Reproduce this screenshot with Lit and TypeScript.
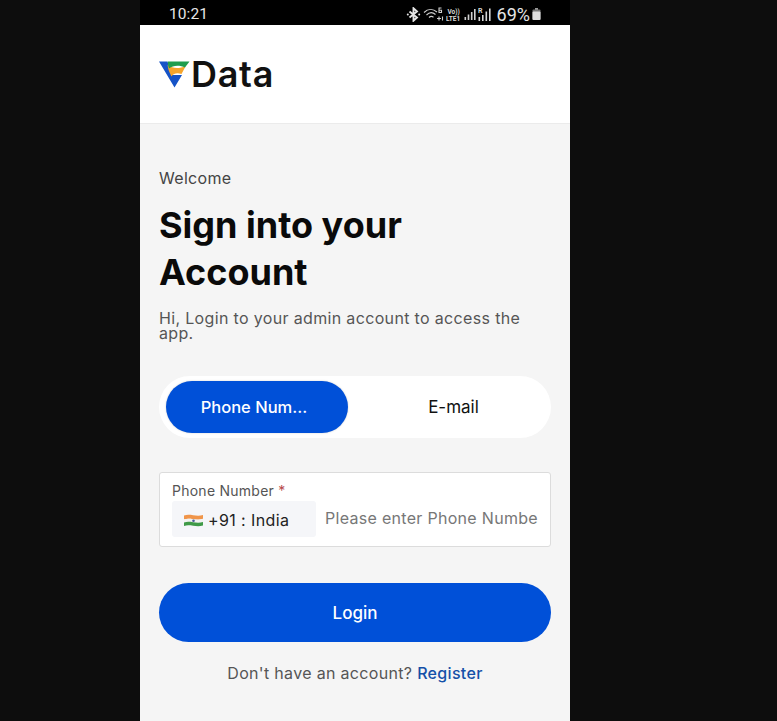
import { LitElement, html, css } from "lit";
import { customElement } from "lit/decorators.js";

@customElement("app-root")
export class AppRoot extends LitElement {
  static styles = css`
    :host {
      display: block;
      height: 721px;
      overflow: hidden;
      background: #0d0d0d;
      font-family: Inter, "Liberation Sans", sans-serif;
    }
    .phone {
      width: 430px;
      height: 721px;
      margin-left: 140px;
      background: #f5f5f5;
      display: flex;
      flex-direction: column;
    }

    /* status bar */
    .status {
      height: 25px;
      flex: none;
      background: #000;
      color: #e6e6e6;
      display: flex;
      align-items: center;
      padding: 3px 29px 0 29px;
      box-sizing: border-box;
    }
    .time {
      font-family: Roboto, sans-serif;
      font-size: 15.5px;
      letter-spacing: 0.1px;
    }
    .status-icons {
      margin-left: auto;
      display: flex;
      align-items: center;
      gap: 2px;
    }
    .pct {
      font-family: Roboto, sans-serif;
      font-size: 18px;
      margin-left: 4px;
    }
    .status-icons svg {
      display: block;
    }

    /* header */
    .header {
      height: 99px;
      flex: none;
      box-sizing: border-box;
      background: #fff;
      border-bottom: 1px solid #ebebeb;
      display: flex;
      align-items: center;
      padding: 0 0 0 19px;
      gap: 1px;
    }
    .brand {
      font-size: 36px;
      font-weight: 600;
      color: #111;
      line-height: 1;
      letter-spacing: 0.7px;
    }

    /* body */
    .content {
      padding: 44px 19px 0 19px;
      display: flex;
      flex-direction: column;
    }
    .welcome {
      font-size: 16px;
      line-height: 20px;
      color: #444;
      letter-spacing: 0.3px;
    }
    h1 {
      margin: 14px 0 0 0;
      font-size: 36px;
      line-height: 47px;
      font-weight: 700;
      color: #0a0a0a;
    }
    .sub {
      margin: 15px 0 0 0;
      font-size: 16px;
      line-height: 15px;
      color: #555;
      letter-spacing: 0.34px;
    }

    /* tabs */
    .tabs {
      margin-top: 35px;
      height: 62px;
      border-radius: 31px;
      background: #fff;
      display: flex;
      align-items: center;
      padding: 0 7px;
      box-sizing: border-box;
    }
    .tab {
      width: 182px;
      height: 52px;
      border-radius: 26px;
      display: flex;
      align-items: center;
      justify-content: center;
      font-size: 17px;
      font-weight: 500;
      color: #111;
    }
    .tab.active {
      box-sizing: border-box;
      padding-right: 6px;
      font-size: 16.5px;
      background: #0050d8;
      color: #fff;
      box-shadow: 0 0 2px rgba(0, 0, 0, 0.2);
    }
    .tab.other {
      flex: 1;
      font-weight: 400;
      padding-left: 15px;
    }

    /* field */
    .field {
      margin-top: 34px;
      height: 75px;
      box-sizing: border-box;
      background: #fff;
      border: 1px solid #dcdcdc;
      border-radius: 3px;
      padding: 9px 12px 0 12px;
    }
    .label {
      font-size: 14px;
      line-height: 18px;
      color: #555;
      letter-spacing: 0.25px;
    }
    .req {
      color: #b84a4a;
    }
    .row {
      display: flex;
      align-items: center;
      margin-top: 1px;
    }
    .code {
      width: 144px;
      height: 36px;
      flex: none;
      box-sizing: border-box;
      background: #f5f6f9;
      border-radius: 3px;
      display: flex;
      align-items: center;
      padding: 2px 0 0 12px;
      gap: 5px;
      font-size: 16px;
      color: #222;
      letter-spacing: 0.4px;
    }
    .placeholder {
      margin: 0 0 2px 9px;
      width: 213px;
      overflow: hidden;
      white-space: nowrap;
      font-size: 16px;
      color: #777;
      letter-spacing: 0.3px;
    }

    /* footer */
    .login {
      margin-top: 36px;
      height: 59px;
      border-radius: 30px;
      background: #0050d8;
      color: #fff;
      display: flex;
      align-items: center;
      justify-content: center;
      font-size: 17px;
      font-weight: 500;
    }
    .register {
      margin-top: 21px;
      text-align: center;
      font-size: 16px;
      line-height: 20px;
      color: #555;
      letter-spacing: 0.32px;
    }
    .register a {
      color: #1450a8;
      font-weight: 500;
      text-decoration: none;
    }
  `;

  render() {
    return html`
      <div class="phone">
        <div class="status">
          <span class="time">10:21</span>
          <div class="status-icons">
            <svg width="15" height="15" viewBox="0 0 15 15" fill="none" stroke="#e6e6e6" stroke-width="1.9">
              <path d="M3.5 4.5l7.5 6-3.5 3.2V1.3L11 4.5l-7.5 6" />
              <circle cx="1.8" cy="7.5" r="1" fill="#e6e6e6" stroke="none" />
              <circle cx="13.2" cy="7.5" r="1" fill="#e6e6e6" stroke="none" />
            </svg>
            <svg width="21" height="15" viewBox="0 0 21 15" fill="none" stroke="#cfcfcf" stroke-width="1.1">
              <path d="M1 5.5C5 1.5 10 1.5 14 5" />
              <path d="M3.5 8C6.5 5 9.5 5 12.5 7.5" />
              <path d="M6 10.5C7.5 9 9 9 10.5 10.2" />
              <path d="M14 11.5h4M16 9.5v4M19.5 13.5V9.5" />
              <path d="M18.5 1H16v4.5h2.5V3.3H16" />
            </svg>
            <svg width="16" height="15" viewBox="0 0 16 15" fill="#d8d8d8">
              <text x="1.5" y="6.5" font-size="6.5" font-family="Roboto, sans-serif" font-weight="700">Vo))</text>
              <text x="0" y="13.5" font-size="6.5" font-family="Roboto, sans-serif" font-weight="700">LTE1</text>
            </svg>
            <svg width="12" height="13" viewBox="0 0 12 13" fill="#cfcfcf">
              <rect x="0.5" y="9" width="1.6" height="3" />
              <rect x="3.7" y="6.5" width="1.6" height="5.5" />
              <rect x="6.9" y="4" width="1.6" height="8" />
              <rect x="10" y="1" width="1.6" height="11" />
            </svg>
            <svg width="13" height="15" viewBox="0 0 13 15" fill="#d8d8d8">
              <text x="0" y="6" font-size="7" font-family="Roboto, sans-serif" font-weight="700">R</text>
              <rect x="0.5" y="10" width="1.6" height="4" />
              <rect x="4" y="8" width="1.6" height="6" />
              <rect x="7.5" y="4.5" width="1.6" height="9.5" />
              <rect x="11" y="1.5" width="1.6" height="12.5" />
            </svg>
            <span class="pct">69%</span>
            <svg width="9" height="12" viewBox="0 0 9 12">
              <rect x="3" y="0" width="3" height="2" fill="#999" />
              <rect x="0.5" y="1.5" width="8" height="10.5" rx="1" fill="#777" />
              <rect x="0.5" y="3.5" width="8" height="8.5" rx="1" fill="#ddd" />
            </svg>
          </div>
        </div>

        <div class="header">
          <svg width="31" height="27" viewBox="0 0 31 27">
            <path d="M0 .5H8.5L13 14H23L15.5 26.5Z" fill="#1553c7" />
            <path d="M8.6 4C14 8 20 7.5 26.5 5.5L22.5 13C18 11.5 14.5 12.5 12.5 15.5C10 11 9 8 8.6 4Z" fill="#f5a52c" />
            <path d="M8.8 .5H30.5C28.5 3 27.5 4.5 26 6.5C21 4 14 4 10 7.5C9.2 5 8.8 2.5 8.8 .5Z" fill="#1f9d4d" />
          </svg>
          <span class="brand">Data</span>
        </div>

        <div class="content">
          <div class="welcome">Welcome</div>
          <h1>Sign into your<br />Account</h1>
          <p class="sub">Hi, Login to your admin account to access the app.</p>

          <div class="tabs">
            <div class="tab active">Phone Num...</div>
            <div class="tab other">E-mail</div>
          </div>

          <div class="field">
            <div class="label">Phone Number <span class="req">*</span></div>
            <div class="row">
              <div class="code">
                <svg width="19" height="13" viewBox="0 0 19 13">
                  <path d="M0 1.5C6 -0.5 12 3 19 1V5C12 7 6 3.5 0 5.5Z" fill="#f0954a" />
                  <path d="M0 5.3C6 3.3 12 6.8 19 4.8V8.2C12 10.2 6 6.7 0 8.7Z" fill="#f2f2f2" />
                  <path d="M0 8.5C6 6.5 12 10 19 8V11.5C12 13.5 6 10 0 12Z" fill="#3f9a47" />
                  <circle cx="9.5" cy="6.7" r="1.3" fill="#4a5a9a" />
                </svg>
                <span>+91 : India</span>
              </div>
              <div class="placeholder">Please enter Phone Number</div>
            </div>
          </div>

          <div class="login">Login</div>
          <div class="register">Don't have an account? <a href="#">Register</a></div>
        </div>
      </div>
    `;
  }
}
